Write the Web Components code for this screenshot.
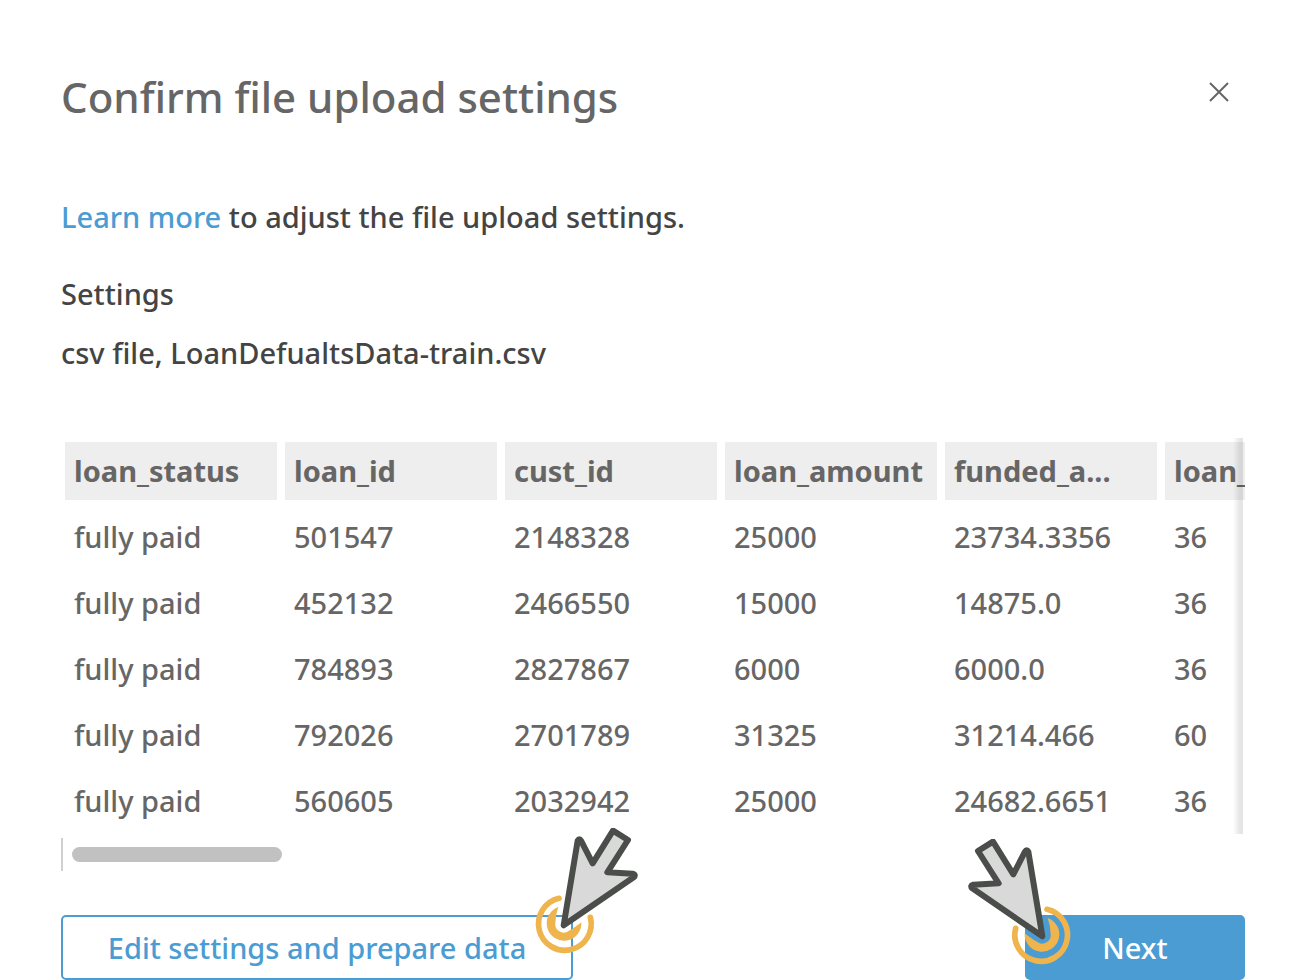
<!DOCTYPE html>
<html lang="en">
<head>
<meta charset="utf-8">
<title>Confirm file upload settings</title>
<style>
  html { background: #fff; }
  body { margin: 0; font-family: "Noto Sans", "Open Sans", sans-serif; color: #444; }
</style>
</head>
<body>
<upload-dialog>
  <span slot="title">Confirm file upload settings</span>
  <file-settings></file-settings>
  <data-preview></data-preview>
  <dialog-button slot="actions" pointer="right">Edit settings and prepare data</dialog-button>
  <dialog-button slot="actions" kind="primary" pointer="left">Next</dialog-button>
</upload-dialog>

<script>
const attach = (el, html) => {
  const t = document.createElement('template');
  t.innerHTML = html;
  el.attachShadow({ mode: 'open' }).append(t.content.cloneNode(true));
};

customElements.define('upload-dialog', class extends HTMLElement {
  constructor() {
    super();
    attach(this, `
      <style>
        :host { display: block; box-sizing: border-box; padding: 64px 55px 0 61px; }
        header { display: flex; justify-content: space-between; align-items: flex-start; }
        h1 { margin: 0; font-size: 42px; line-height: 66px; font-weight: 500; color: #666; }
        .close { display: flex; margin: 12px 10px 0 0; padding: 6px; border: 0; background: none; }
        main { margin-top: 62px; }
        footer { display: flex; justify-content: space-between; margin-top: 44px; }
      </style>
      <header>
        <h1><slot name="title"></slot></h1>
        <button class="close" aria-label="Close">
          <svg width="20" height="20" viewBox="0 0 20 20" fill="none" stroke="#666" stroke-width="2"><path d="M1 1 19 19M19 1 1 19"/></svg>
        </button>
      </header>
      <main><slot></slot></main>
      <footer><slot name="actions"></slot></footer>`);
  }
});

customElements.define('file-settings', class extends HTMLElement {
  constructor() {
    super();
    attach(this, `
      <style>
        :host { display: block; font-size: 29px; line-height: 50px; font-weight: 500; color: #444; }
        p, h2 { margin: 0; font: inherit; }
        h2 { margin-top: 27px; }
        .file { margin-top: 9px; }
        a { color: #4b9cd3; text-decoration: none; }
      </style>
      <p><a href="#">Learn more</a> to adjust the file upload settings.</p>
      <h2>Settings</h2>
      <p class="file">csv file, LoanDefualtsData-train.csv</p>`);
  }
});

customElements.define('data-preview', class extends HTMLElement {
  constructor() {
    super();
    const heads = ['loan_status', 'loan_id', 'cust_id', 'loan_amount', 'funded_a...', 'loan_'];
    const rows = [
      ['fully paid', '501547', '2148328', '25000', '23734.3356', '36'],
      ['fully paid', '452132', '2466550', '15000', '14875.0', '36'],
      ['fully paid', '784893', '2827867', '6000', '6000.0', '36'],
      ['fully paid', '792026', '2701789', '31325', '31214.466', '60'],
      ['fully paid', '560605', '2032942', '25000', '24682.6651', '36']
    ];
    attach(this, `
      <style>
        :host { display: block; margin-top: 60px; }
        .view { position: relative; overflow: hidden; }
        .view::after { content: ""; position: absolute; top: 0; bottom: 0; right: 2px; width: 10px;
          background: linear-gradient(to right, rgba(0,0,0,0), rgba(0,0,0,.1) 70%); }
        table { table-layout: fixed; width: 1320px; border-spacing: 0; font-size: 29px; line-height: 40px; color: #666; }
        th, td { box-sizing: border-box; height: 66px; padding: 0 9px; border: 4px solid transparent;
          background-clip: padding-box; text-align: left; white-space: nowrap; font-weight: 500; }
        th { background-color: #eee; font-weight: 700; }
        .track { display: flex; align-items: center; box-sizing: border-box; height: 33px; margin-top: 4px;
          padding-left: 9px; border-left: 2px solid #d0d0d0; }
        .thumb { width: 210px; height: 15px; border-radius: 8px; background: #c1c1c1; }
      </style>
      <div class="view">
        <table>
          <thead><tr>${heads.map(h => `<th scope="col">${h}</th>`).join('')}</tr></thead>
          <tbody>${rows.map(r => `<tr>${r.map(c => `<td>${c}</td>`).join('')}</tr>`).join('')}</tbody>
        </table>
      </div>
      <div class="track"><div class="thumb"></div></div>`);
  }
});

customElements.define('dialog-button', class extends HTMLElement {
  constructor() {
    super();
    attach(this, `
      <style>
        :host { display: block; position: relative; width: 512px; }
        :host([kind="primary"]) { width: 220px; }
        button { display: block; box-sizing: border-box; width: 100%; height: 65px; padding: 0; border: 2px solid #4b9cd3;
          border-radius: 5px; background: #fff; color: #4b9cd3; font: inherit; font-size: 29px; font-weight: 500; }
        :host([kind="primary"]) button { background: #4b9cd3; color: #fff; }
        click-pointer { position: absolute; }
        :host([pointer="right"]) click-pointer { right: -67px; top: -87px; }
        :host([pointer="left"]) click-pointer { left: -59px; top: -76px; }
      </style>
      <button><slot></slot></button>
      <click-pointer></click-pointer>`);
    this.shadowRoot.querySelector('click-pointer').toggleAttribute('flip', this.getAttribute('pointer') === 'left');
  }
});

customElements.define('click-pointer', class extends HTMLElement {
  constructor() {
    super();
    attach(this, `
      <style>
        :host { display: block; pointer-events: none; }
        :host([flip]) { transform: scaleX(-1); }
        svg { display: block; }
      </style>
      <svg width="116" height="132" viewBox="0 0 348 396" fill="none" aria-hidden="true">
        <path d="M105 211A79 79 0 1 0 199 268" stroke="#efb44c" stroke-width="17" stroke-linecap="round"/>
        <path d="M103 237A52 52 0 1 0 172 283Q150 300 137 307A26 26 0 0 1 94 284Q95 260 103 237Z" fill="#efb44c"/>
        <path d="M119 292 161 38Q166 29 171 38L206 106 267 8 312 36 250 133 326 137Q337 140 329 148Z" fill="#d9d9d9" stroke="#4b4d4b" stroke-width="18" stroke-linejoin="round"/>
      </svg>`);
  }
});
</script>
</body>
</html>
